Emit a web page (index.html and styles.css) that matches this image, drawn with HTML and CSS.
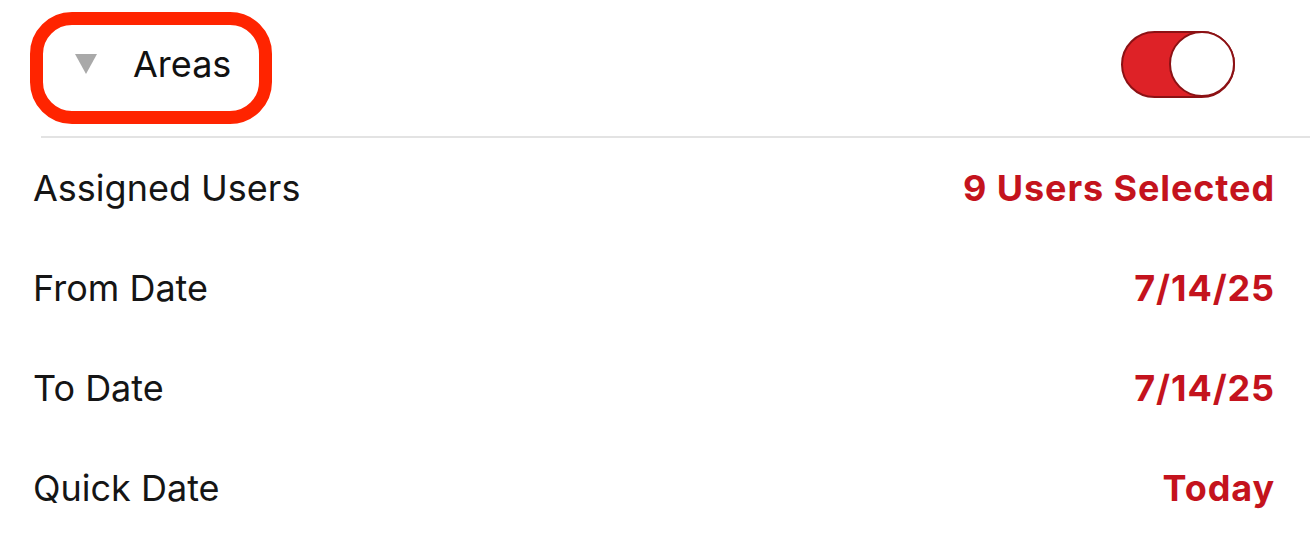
FILE: index.html
```html
<!DOCTYPE html>
<html lang="en">
<head>
  <meta charset="UTF-8">
  <title>Filters</title>
  <link rel="stylesheet" href="styles.css">
</head>
<body>
  <div class="panel">
    <div class="header">
      <div class="section-title">
        <span class="caret"></span>
        <span class="title">Areas</span>
      </div>
      <div class="toggle on"><span class="knob"></span></div>
      <span class="highlight"></span>
    </div>

    <div class="row">
      <span class="label">Assigned Users</span>
      <span class="value">9 Users Selected</span>
    </div>
    <div class="row">
      <span class="label">From Date</span>
      <span class="value">7/14/25</span>
    </div>
    <div class="row">
      <span class="label">To Date</span>
      <span class="value">7/14/25</span>
    </div>
    <div class="row">
      <span class="label">Quick Date</span>
      <span class="value">Today</span>
    </div>
  </div>
</body>
</html>
```

FILE: styles.css
```css
body {
  margin: 0;
  background: #fff;
  font-family: Inter, "Noto Sans", sans-serif;
  color: #111;
  overflow: hidden;
}
.panel {
  width: 1310px;
}
.header {
  position: relative;
  display: flex;
  align-items: center;
  justify-content: space-between;
  height: 138px;
  padding: 0 75px 8px 0;
  box-sizing: border-box;
  margin-left: 41px;
  border-bottom: 2px solid #e3e3e3;
}
.section-title {
  display: flex;
  align-items: center;
  padding-left: 34px;
}
.caret {
  width: 0;
  height: 0;
  border-left: 11px solid transparent;
  border-right: 11px solid transparent;
  border-top: 20px solid #a9a9a9;
  margin-right: 36px;
}
.title {
  font-size: 36px;
}
/* annotation ring around the section title */
.highlight {
  position: absolute;
  left: -11px;
  top: 12px;
  width: 242px;
  height: 112px;
  border: 13px solid #ff2400;
  border-radius: 42px;
  box-sizing: border-box;
}
.toggle {
  width: 114px;
  height: 67px;
  border-radius: 34px;
  background: #de2227;
  border: 2px solid #8c1114;
  box-sizing: border-box;
  display: flex;
  align-items: center;
  justify-content: flex-end;
}
.knob {
  width: 66px;
  height: 66px;
  margin-right: -2px;
  border-radius: 50%;
  background: #fff;
  border: 2px solid #8c1114;
  box-sizing: border-box;
}
.row {
  display: flex;
  align-items: center;
  justify-content: space-between;
  height: 100px;
  padding: 0 35px 0 33px;
}
.label {
  font-size: 36px;
  color: #151515;
}
.value {
  font-size: 36px;
  font-weight: 700;
  letter-spacing: 0.9px;
  color: #c4131d;
}
```
